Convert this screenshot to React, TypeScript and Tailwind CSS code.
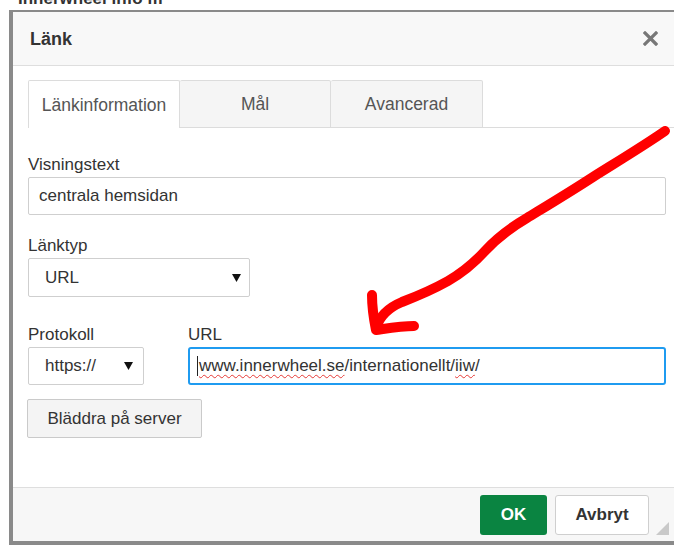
import React from "react";

const font = { fontFamily: '"Liberation Sans", Arial, sans-serif' };

function Caret() {
  return (
    <svg width="9" height="8" viewBox="0 0 9 8">
      <path d="M0 0 H9 L4.5 8 Z" fill="#111" />
    </svg>
  );
}

function Field({ label, children, gap }: { label: string; children: React.ReactNode; gap: string }) {
  return (
    <div className="flex flex-col">
      <label className={`text-[17px] leading-[20px] text-[#333] ${gap}`}>{label}</label>
      {children}
    </div>
  );
}

export default function App() {
  return (
    <div className="relative w-[674px] h-[545px] overflow-hidden bg-white" style={font}>
      {/* page text peeking above the dialog */}
      <div className="h-[10px] overflow-hidden pl-[18px]">
        <div className="-mt-[11px] text-[17px] font-bold leading-[20px] text-[#333]">Innerwheel info m</div>
      </div>

      {/* dialog window */}
      <div className="ml-[9px] w-[672px] border-l-[4px] border-t-[2px] border-b-[4px] border-[#8a8a8a] bg-white flex flex-col h-[535px]">
        {/* title bar */}
        <div className="h-[54px] shrink-0 bg-[#f8f8f8] border-b border-[#dedede] flex items-center justify-between pl-[17px] pr-[23px]">
          <span className="text-[18px] font-bold text-[#333] leading-none mt-[1px]">Länk</span>
          <svg width="15" height="15" viewBox="0 0 15 15">
            <path d="M2 2 L13 13 M13 2 L2 13" stroke="#777" strokeWidth="3.2" strokeLinecap="square" />
          </svg>
        </div>

        {/* body */}
        <div className="flex-1 px-[15px] pt-[14px]">
          <div className="flex items-end h-[48px] -mr-[15px]">
            <div className="w-[152px] h-[48px] pt-[1px] bg-white border border-b-0 border-[#dcdcdc] rounded-t-[2px] flex items-center justify-center text-[17.5px] text-[#555]">
              Länkinformation
            </div>
            <div className="w-[151px] h-[48px] pt-[1px] bg-[#f5f5f5] border border-l-0 border-[#dcdcdc] rounded-t-[2px] flex items-center justify-center text-[17.5px] text-[#555]">
              Mål
            </div>
            <div className="w-[152px] h-[48px] pt-[1px] bg-[#f5f5f5] border border-l-0 border-[#dcdcdc] rounded-t-[2px] flex items-center justify-center text-[17.5px] text-[#555]">
              Avancerad
            </div>
            <div className="flex-1 border-b border-[#dcdcdc]" />
          </div>

          <div className="mt-[27px]">
            <Field label="Visningstext" gap="mb-[2px]">
              <div className="h-[38px] border border-[#cfcfcf] rounded-[2px] flex items-center pl-[10px] text-[17px] text-[#333]">
                centrala hemsidan
              </div>
            </Field>
          </div>

          <div className="mt-[21px]">
            <Field label="Länktyp" gap="mb-[2px]">
              <div className="w-[222px] h-[39px] border border-[#cfcfcf] rounded-[2px] flex items-center justify-between pl-[16px] pr-[8px] text-[17px] text-[#333]">
                <span>URL</span>
                <Caret />
              </div>
            </Field>
          </div>

          <div className="mt-[28px] flex gap-[44px]">
            <Field label="Protokoll" gap="mb-[2px]">
              <div className="w-[116px] h-[38px] border border-[#cfcfcf] rounded-[2px] flex items-center justify-between pl-[16px] pr-[10px] text-[17px] text-[#333]">
                <span>https://</span>
                <Caret />
              </div>
            </Field>
            <div className="flex-1">
              <Field label="URL" gap="mb-[2px]">
                <div className="h-[38px] border-2 border-[#1f9bf0] rounded-[3px] flex items-center pl-[7px] text-[17px] text-[#333] whitespace-nowrap">
                  <span className="w-px h-[20px] bg-[#222] mr-px" />
                  <span className="underline decoration-wavy decoration-[#e53935] decoration-1 underline-offset-[3px]">
                    www.innerwheel.se
                  </span>
                  <span>/internationellt/</span>
                  <span className="underline decoration-wavy decoration-[#e53935] decoration-1 underline-offset-[3px]">iiw</span>
                  <span>/</span>
                </div>
              </Field>
            </div>
          </div>

          <button className="mt-[14px] w-[175px] h-[39px] bg-[#f4f4f4] border border-[#cacaca] rounded-[2px] text-[17px] text-[#333] -ml-px">
            Bläddra på server
          </button>
        </div>

        {/* footer */}
        <div className="relative h-[54px] shrink-0 bg-[#f7f7f7] border-t border-[#dedede] flex items-start justify-end gap-[8px] pt-[7px] pr-[32px]">
          <button className="w-[67px] h-[40px] bg-[#0a8441] rounded-[3px] text-[17px] font-bold text-white">OK</button>
          <button className="w-[94px] h-[40px] bg-white border border-[#cfcfcf] rounded-[3px] text-[17px] font-bold text-[#333]">
            Avbryt
          </button>
          <svg className="absolute right-[12px] bottom-[6px]" width="13" height="13" viewBox="0 0 13 13">
            <path d="M13 0 V13 H0 Z" fill="#c9c9c9" />
          </svg>
        </div>
      </div>

      {/* hand-drawn red arrow */}
      <svg className="absolute inset-0 pointer-events-none" width="674" height="545" viewBox="0 0 674 545">
        <path
          d="M665 131 C 645 145, 612 165, 593 177 C 570 192, 545 207, 527 218 C 510 228, 495 240, 485 251 C 475 262, 462 273, 448 281 C 432 290, 415 297, 402 302 C 390 307, 380 315, 376 328"
          fill="none"
          stroke="#ff0000"
          strokeWidth="10"
          strokeLinecap="round"
          strokeLinejoin="round"
        />
        <path
          d="M372 295 C 372 308, 374 320, 376 330 C 390 328, 402 326, 414 326"
          fill="none"
          stroke="#ff0000"
          strokeWidth="10"
          strokeLinecap="round"
          strokeLinejoin="round"
        />
      </svg>
    </div>
  );
}
